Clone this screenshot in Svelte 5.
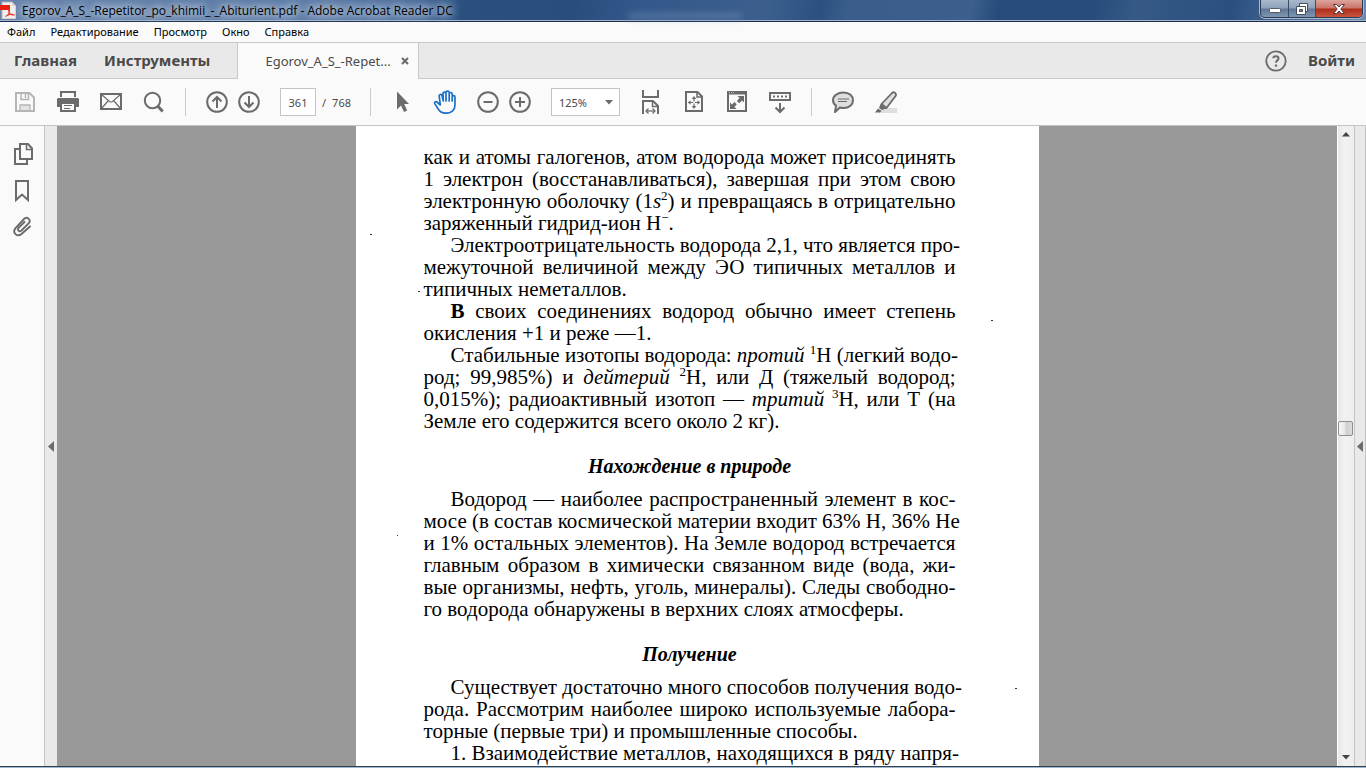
<script>
  const menu = ['Файл', 'Редактирование', 'Просмотр', 'Окно', 'Справка'];
  let pageNumber = $state('361');
  let zoomLevel = $state('125%');
  const scrollShare = 47;

  // Each line keeps the breaks of the printed page; `end` closes a paragraph, `indent` opens one.
  const sections = [
    {
      lines: [
        { t: 'как и атомы галогенов, атом водорода может присоединять' },
        { t: '1 электрон (восстанавливаться), завершая при этом свою' },
        { t: 'электронную оболочку (1<i>s</i><sup>2</sup>) и превращаясь в отрицательно' },
        { t: 'заряженный гидрид-ион Н<sup>−</sup>.', end: true },
        { t: 'Электроотрицательность водорода 2,1, что является про-', indent: true },
        { t: 'межуточной величиной между ЭО типичных металлов и' },
        { t: 'типичных неметаллов.', end: true },
        { t: '<b>В</b> своих соединениях водород обычно имеет степень', indent: true },
        { t: 'окисления +1 и реже —1.', end: true },
        { t: 'Стабильные изотопы водорода: <i>протий</i> <sup>1</sup>Н (легкий водо-', indent: true },
        { t: 'род; 99,985%) и <i>дейтерий</i> <sup>2</sup>Н, или Д (тяжелый водород;' },
        { t: '0,015%); радиоактивный изотоп — <i>тритий</i> <sup>3</sup>Н, или Т (на' },
        { t: 'Земле его содержится всего около 2 кг).', end: true }
      ]
    },
    {
      title: 'Нахождение в природе',
      lines: [
        { t: 'Водород — наиболее распространенный элемент в кос-', indent: true },
        { t: 'мосе (в состав космической материи входит 63% Н, 36% Не' },
        { t: 'и 1% остальных элементов). На Земле водород встречается' },
        { t: 'главным образом в химически связанном виде (вода, жи-' },
        { t: 'вые организмы, нефть, уголь, минералы). Следы свободно-' },
        { t: 'го водорода обнаружены в верхних слоях атмосферы.', end: true }
      ]
    },
    {
      title: 'Получение',
      lines: [
        { t: 'Существует достаточно много способов получения водо-', indent: true },
        { t: 'рода. Рассмотрим наиболее широко используемые лабора-' },
        { t: 'торные (первые три) и промышленные способы.', end: true },
        { t: '1. Взаимодействие металлов, находящихся в ряду напря-', indent: true }
      ]
    }
  ];
</script>

<div class="window">
  <header class="titlebar">
    <svg class="appicon" width="16" height="18" viewBox="0 0 16 18" aria-hidden="true">
      <path d="M2 1h10l4 4v13H2z" fill="#f1efee" stroke="#b9b4b2" stroke-width="1" />
      <path d="M12 1v4h4" fill="#d8d4d2" />
      <path d="M0 4h10v5H0z" fill="#e8200f" />
      <path d="M5.500 15.500c3-1.500 4.500-4.500 4-6.500-.6-1.200-1.400.4-.4 2.500 1 1.800 3.400 3 5 2.400-2-1.400-6-.4-8.600 1.600z" fill="none" stroke="#e23a2c" stroke-width="1.100" />
    </svg>
    <h1>Egorov_A_S_-Repetitor_po_khimii_-_Abiturient.pdf - Adobe Acrobat Reader DC</h1>
    <div class="ghost" aria-hidden="true"></div>
    <div class="winbuttons">
      <button class="min" aria-label="Свернуть">
        <svg width="12" height="6" viewBox="0 0 12 6"><rect x=".5" y=".5" width="11" height="4" rx="1" fill="#fff" stroke="#555b66" /></svg>
      </button>
      <button class="max" aria-label="Восстановить">
        <svg width="14" height="14" viewBox="0 0 14 14">
          <path d="M4.500 1.500h8v8h-8z" fill="#fff" stroke="#474e5b" />
          <path d="M1.500 4.500h9v8h-9z" fill="#fff" stroke="#474e5b" />
          <path d="M4.500 7.500h3v2h-3z" fill="#6f87a6" stroke="#474e5b" />
        </svg>
      </button>
      <button class="close" aria-label="Закрыть">
        <svg width="14" height="12" viewBox="0 0 14 12"><path d="M1.500 1.500h3.200L7 4l2.300-2.500h3.200L8.800 6l3.700 4.500H9.300L7 8l-2.300 2.500H1.500L5.200 6z" fill="#fff" stroke="#54343a" /></svg>
      </button>
    </div>
  </header>

  <nav class="menubar">
    {#each menu as item}<button>{item}</button>{/each}
  </nav>

  <div class="tabs">
    <button class="tab home">Главная</button>
    <button class="tab tools">Инструменты</button>
    <div class="doc-tab">
      <button class="doc-name">Egorov_A_S_-Repet...</button>
      <button class="doc-close" aria-label="Закрыть вкладку">
        <svg width="8" height="8" viewBox="0 0 8 8"><path d="M1 1l6 6M7 1L1 7" stroke="#6a6a6a" stroke-width="2" /></svg>
      </button>
    </div>
    <div class="account">
      <button class="help" aria-label="Помощь">
        <svg width="22" height="22" viewBox="0 0 22 22" fill="none" stroke="#6b6b6b">
          <circle cx="11" cy="11" r="9.700" stroke-width="1.800" />
          <path d="M8.300 8.200C8.300 5.500 13.500 5.500 13.500 8.400c0 2-2.500 2-2.500 4.400" stroke-width="2" />
          <path d="M11 14.500v2.200" stroke-width="2.200" />
        </svg>
      </button>
      <button class="tab signin">Войти</button>
    </div>
  </div>

  <div class="toolbar">
    <button aria-label="Сохранить">
      <svg viewBox="0 0 24 24" fill="none" stroke="#b5b5b5" stroke-width="2">
        <path d="M7 15h10v6H7z" fill="#e4e4e4" stroke-width="1.300" />
        <path d="M3 3h13.500L21 7.500V21H3z" />
        <path d="M8 3v6.500h7.500V3" stroke-width="1.500" /><path d="M12.500 4v4" stroke-width="1.500" />
      </svg>
    </button>
    <button aria-label="Печать">
      <svg viewBox="0 0 24 24">
        <path d="M4 1h16v6H4z" fill="#6b6b6b" /><path d="M6 3h12v4H6z" fill="#fafafa" />
        <path d="M2 8h20l1 1v8h-4v-4H5v4H1V9z" fill="#6b6b6b" />
        <path d="M5 13h14v8H5z" fill="#fafafa" stroke="#6b6b6b" stroke-width="2" />
        <path d="M8 15.500h8M8 18.500h6" stroke="#6b6b6b" />
      </svg>
    </button>
    <button aria-label="Отправить по почте">
      <svg viewBox="0 0 24 24" fill="none" stroke="#6b6b6b">
        <path d="M2 4h20v15H2z" stroke-width="2" />
        <path d="M2.500 4.500L11 12h2l8.500-7.500M2.500 18.500L9 11M21.500 18.500L15 11" stroke-width="1.200" />
      </svg>
    </button>
    <button aria-label="Поиск">
      <svg viewBox="0 0 24 24" fill="none" stroke="#6b6b6b">
        <circle cx="10.500" cy="10.500" r="7.700" stroke-width="2" /><path d="M15.500 15.800l5.200 5.600" stroke-width="3" />
      </svg>
    </button>
    <span class="sep"></span>
    <div class="pair">
      <button aria-label="Предыдущая страница">
        <svg viewBox="0 0 24 24" fill="none" stroke="#6b6b6b" stroke-width="2">
          <circle cx="12" cy="12" r="9.800" /><path d="M12 18V7M7.500 11.500L12 7l4.500 4.500" />
        </svg>
      </button>
      <button aria-label="Следующая страница">
        <svg viewBox="0 0 24 24" fill="none" stroke="#6b6b6b" stroke-width="2">
          <circle cx="12" cy="12" r="9.800" /><path d="M12 6v11M7.500 12.500L12 17l4.500-4.500" />
        </svg>
      </button>
    </div>
    <div class="pages">
      <input aria-label="Номер страницы" bind:value={pageNumber} />
      <span>/</span><span>768</span>
    </div>
    <span class="sep"></span>
    <button aria-label="Выделение">
      <svg viewBox="0 0 24 24"><path d="M7 1.500v18l4-4 3 6.500 3.200-1.400-3-6.500H19z" fill="#6b6b6b" /></svg>
    </button>
    <button aria-label="Рука">
      <svg viewBox="0 0 24 24" fill="none" stroke="#1a72c7" stroke-width="1.700" stroke-linejoin="round" stroke-linecap="round">
        <path d="M7.300 15L4 12c-1.400-1-3 .2-2.200 1.600L5 18.700C6.600 22 9 23.200 12.800 23.200c5.400 0 9.200-3 9.200-8.200V7.200c0-2-2.800-2-2.800 0V11V4c0-2-3-2-3 0v7V2.600c0-2-3.200-2-3.200 0V11V3.500c-.1-2-3.200-1.800-3 .2l.3 7.300L9 5.600c-.6-1.800-3.100-1.300-2.800.6z" />
      </svg>
    </button>
    <div class="pair">
      <button aria-label="Уменьшить">
        <svg viewBox="0 0 24 24" fill="none" stroke="#6b6b6b" stroke-width="2"><circle cx="12" cy="12" r="9.800" /><path d="M7.500 12h9" /></svg>
      </button>
      <button aria-label="Увеличить">
        <svg viewBox="0 0 24 24" fill="none" stroke="#6b6b6b" stroke-width="2"><circle cx="12" cy="12" r="9.800" /><path d="M7 12h10M12 7v10" /></svg>
      </button>
    </div>
    <div class="zoom">
      <select aria-label="Масштаб" bind:value={zoomLevel}>
        <option>100%</option><option>125%</option><option>150%</option>
      </select>
      <svg width="8" height="5" viewBox="0 0 8 5" aria-hidden="true"><path d="M0 0h8L4 4.500z" fill="#6b6b6b" /></svg>
    </div>
    <button aria-label="По ширине">
      <svg viewBox="0 0 24 24" fill="none" stroke="#6b6b6b" stroke-width="2">
        <path d="M4 0v7h15V0" /><path d="M4 24V11h10l5 5v8" /><path d="M13.500 11v5.500H19" stroke-width="1.500" />
        <path d="M7 21h9" stroke-width="1.300" /><path d="M9.500 18.500L7 21l2.500 2.500M13.500 18.500L16 21l-2.500 2.500" stroke-width="1.300" />
      </svg>
    </button>
    <button aria-label="Страница целиком">
      <svg viewBox="0 0 24 24" fill="none" stroke="#6b6b6b">
        <path d="M4 2h11.500L20 6.500V21H4z" stroke-width="2" /><path d="M15 2v5h5" stroke-width="1.500" />
        <path d="M8 12.500h3M13 12.500h3M12 8.500v3M12 13.500v3" stroke-width="1.200" />
        <path d="M12 6l2.300 3H9.700zM12 19l2.300-3H9.700zM5.800 12.500l2.700-2.200v4.400zM18.200 12.500l-2.700-2.200v4.400z" fill="#6b6b6b" stroke="none" />
      </svg>
    </button>
    <button aria-label="Во весь экран">
      <svg viewBox="0 0 24 24" fill="none" stroke="#6b6b6b">
        <path d="M3 2h18v19H3z" stroke-width="2" /><path d="M3 3h18" stroke-width="3" /><path d="M4 2.500h6" stroke="#bdbdbd" stroke-dasharray="1 1" />
        <path d="M12.500 6H19v6.500l-2-2-2.800 2.800-2.300-2.300L14.500 8zM11.500 19H5v-6.500l2 2 2.500-2.500 2.300 2.300L9.500 17z" fill="#6b6b6b" stroke="none" />
      </svg>
    </button>
    <button aria-label="Панель инструментов">
      <svg viewBox="0 0 24 24" fill="none" stroke="#6b6b6b" stroke-width="2">
        <path d="M2 3h20v7H2z" /><path d="M5 6.500h14" stroke-dasharray="2 2" /><path d="M12 13v9M7.500 17.500L12 22l4.500-4.500" />
      </svg>
    </button>
    <span class="sep"></span>
    <button aria-label="Комментарий">
      <svg viewBox="0 0 24 24" stroke="#6b6b6b">
        <path d="M12.500 2.500C18.500 2.500 22 6 22 10.200S18.500 18 12.500 18c-1.300 0-2.500-.1-3.600-.5L4 22l1-6.400C3 14.200 2 12.400 2 10.200 2 6 6.500 2.500 12.500 2.500z" fill="#dedede" stroke-width="2" stroke-linejoin="round" />
        <path d="M7 9h11M7 11.500h9" stroke-width="1.200" />
      </svg>
    </button>
    <button aria-label="Выделить текст">
      <svg viewBox="0 0 24 24">
        <path d="M7 18h16v5H5z" fill="#dedede" />
        <path d="M7.500 14L18 3c2-1.800 5 .6 3.600 3L12.500 18z" fill="#dedede" stroke="#6b6b6b" stroke-width="1.800" stroke-linejoin="round" />
        <path d="M6.500 14l6 4.500-4.500 1.500-3-2zM4 18.500L7.500 21 6 22.500H1z" fill="#6b6b6b" />
      </svg>
    </button>
  </div>

  <div class="workspace">
    <aside class="rail">
      <button aria-label="Миниатюры страниц">
        <svg viewBox="0 0 24 24" fill="none" stroke="#6b6b6b" stroke-width="2">
          <path d="M7 7H3v15h12v-4" /><path d="M8 2h8L20 6.500V17H8z" /><path d="M14.500 2v5.500H20" stroke-width="1.500" />
        </svg>
      </button>
      <button aria-label="Закладки">
        <svg viewBox="0 0 24 24" fill="none" stroke="#6b6b6b" stroke-width="2"><path d="M4 3h12v19l-6-5.500L4 22z" /></svg>
      </button>
      <button aria-label="Вложения">
        <svg viewBox="0 0 24 24" fill="none" stroke="#6b6b6b" stroke-width="1.900" stroke-linecap="round">
          <path d="M18 12.500L9.500 20C5 23.500 0 18.800 3.500 14.200L12 5c3-3 7.500.6 4.800 4.200L9.500 16.500c-2.400 2-4.600-.6-2.700-2.800L12.500 8" />
        </svg>
      </button>
    </aside>
    <button class="collapse left" aria-label="Свернуть левую панель"><svg width="6" height="11" viewBox="0 0 6 11"><path d="M6 0v11L0 5.500z" fill="#6b6b6b" /></svg></button>

    <main class="canvas">
      <article class="page">
        {#each sections as section}
          {#if section.title}<h2>{section.title}</h2>{/if}
          {#each section.lines as line}
            <div class="line" class:end={line.end} class:indent={line.indent}>{@html line.t}</div>
          {/each}
        {/each}
        <svg class="specks" viewBox="0 0 683 640" width="683" height="640" aria-hidden="true">
          <path d="M14 108h2v1h-2zM62 165h2v1h-2zM635 194h2v1h-2zM41 409h1v1h-1zM659 562h2v1h-2z" fill="#333" />
        </svg>
      </article>
    </main>

    <div class="scrollbar">
      <button aria-label="Прокрутить вверх"><svg width="8" height="5" viewBox="0 0 8 5"><path d="M4 0l4 4.500H0z" fill="#444" /></svg></button>
      <div class="track">
        <span style="flex-grow: {scrollShare}"></span>
        <span class="thumb"></span>
        <span style="flex-grow: {100 - scrollShare}"></span>
      </div>
      <button aria-label="Прокрутить вниз"><svg width="8" height="5" viewBox="0 0 8 5"><path d="M4 4.500L8 0H0z" fill="#444" /></svg></button>
    </div>
    <button class="collapse right" aria-label="Показать правую панель"><svg width="6" height="11" viewBox="0 0 6 11"><path d="M6 0v11L0 5.500z" fill="#6b6b6b" /></svg></button>
  </div>
  <div class="frame"></div>
</div>

<style>
  :global(body) { margin: 0; overflow: hidden; }
  .window {
    display: flex;
    flex-direction: column;
    height: 100vh;
    background: #fafafa;
    color: #000;
    font-family: "Noto Sans", "Open Sans", sans-serif;
    font-size: 11px;
  }
  button {
    display: flex;
    align-items: center;
    justify-content: center;
    flex: none;
    margin: 0;
    padding: 0;
    border: 0;
    background: none;
    color: inherit;
    font: inherit;
    white-space: nowrap;
  }
  svg { display: block; flex: none; }

  .titlebar {
    position: relative;
    display: flex;
    flex: none;
    box-sizing: border-box;
    height: 22px;
    border-bottom: 1px solid #1d2d4a;
    box-shadow: inset 0 -1px #9fb3cf;
    background: linear-gradient(100deg, #6783ab 0, #5b79a5 24%, #4d6d9c 30%, #2b5080 34%, #294e7e 42%, #34588a 47%, #3c5f8e 56%, #2c5181 60%, #3a5d8b 62%, #3c5f8d 71%, #274c7b 73%, #284d7c 80%, #365985 83%, #2b5080 90%, #6b87ad 100%);
  }
  .appicon { margin: 1px 6px 0 0; }
  h1 {
    margin: 0 auto 0 0;
    font-family: "Open Sans", "Noto Sans", sans-serif;
    font-size: 12px;
    font-weight: 400;
    line-height: 22px;
    white-space: nowrap;
    text-shadow: 0 0 8px #c9d6e6, 0 0 8px #c9d6e6, 0 0 10px #c9d6e6;
  }
  .ghost {
    position: absolute;
    left: 46%;
    bottom: 2px;
    width: 114px;
    height: 6px;
    background: #6f8db6;
    opacity: 0.5;
    filter: blur(3px);
  }
  .winbuttons {
    display: flex;
    height: 17px;
    margin-right: 3px;
    border: 1px solid #2d3c55;
    border-top: 0;
    border-radius: 0 0 5px 5px;
    box-shadow: 0 0 0 1px #a8b9cf;
    overflow: hidden;
  }
  .winbuttons button { background: linear-gradient(#a9b8cc 0, #8ea1ba 48%, #5f7796 52%, #7d96b4 100%); }
  .min { width: 28px; border-right: 1px solid #3c4c66; }
  .min svg { margin-top: 4px; }
  .max { width: 27px; border-right: 1px solid #3c4c66; }
  .winbuttons .close { width: 46px; background: linear-gradient(#dba59d 0, #cb7468 48%, #ad2d1a 52%, #c9553f 100%); }

  .menubar {
    display: flex;
    flex: none;
    gap: 15px;
    height: 18px;
    padding: 0 0 2px 7px;
    border-bottom: 1px solid #c9c9c9;
  }
  .tabs {
    display: flex;
    flex: none;
    height: 36px;
    background: #e9e9e9;
    color: #4a4a4a;
    box-shadow: inset 0 -1px #c9c9c9;
  }
  .tab { padding-bottom: 2px; font-size: 15px; font-weight: 700; }
  .home { margin-left: 14px; }
  .tools { margin: 0 27px; }
  .doc-tab {
    display: flex;
    align-items: center;
    gap: 10px;
    padding: 0 9px 0 27px;
    border: solid #c9c9c9;
    border-width: 0 1px;
    background: #fafafa;
  }
  .doc-name { font-size: 13px; }
  .account { display: flex; gap: 21px; margin-left: auto; padding-right: 11px; }

  .toolbar {
    display: flex;
    flex: none;
    align-items: center;
    gap: 19px;
    height: 47px;
    box-sizing: border-box;
    padding: 0 13px;
    border-bottom: 1px solid #c4c4c4;
    color: #4a4a4a;
  }
  .toolbar svg { width: 24px; height: 24px; }
  .sep { width: 1px; height: 28px; background: #cacaca; }
  .pair { display: flex; gap: 8px; }
  .pages { display: flex; align-items: center; gap: 6px; }
  input, select {
    box-sizing: border-box;
    height: 28px;
    margin: 0;
    border: 1px solid #c4c4c4;
    border-radius: 0;
    background: #fff;
    color: #4a4a4a;
    font: inherit;
  }
  input { width: 36px; padding: 0; text-align: center; }
  .zoom { position: relative; }
  select { display: block; width: 69px; padding: 0 7px; appearance: none; }
  .toolbar .zoom svg { position: absolute; right: 7px; top: 12px; width: 8px; height: 5px; }

  .workspace { display: flex; flex: 1; min-height: 0; }
  .rail {
    display: flex;
    flex: none;
    flex-direction: column;
    align-items: flex-start;
    gap: 12px;
    width: 44px;
    box-sizing: border-box;
    padding: 16px 0 0 12px;
  }
  .rail svg { width: 24px; height: 24px; }
  .collapse { box-sizing: border-box; width: 13px; background: #e9e9e9; border-left: 1px solid #c4c4c4; }
  .right { width: 12px; border-right: 1px solid #c4c4c4; }
  .canvas { flex: 1; min-width: 0; overflow: hidden; background: #999; }
  .page {
    position: relative;
    box-sizing: border-box;
    width: 683px;
    min-height: 100%;
    margin: 0 auto;
    padding: 20px 83px 0 68px;
    background: #fff;
    font-family: "Liberation Serif", serif;
    font-size: 21px;
    line-height: 22px;
  }
  .line { text-align: justify; text-align-last: justify; white-space: nowrap; }
  .end { text-align-last: left; }
  .indent { padding-left: 27px; }
  .line :global(sup) { font-size: 13px; line-height: 0; }
  h2 {
    margin: 23px 0 11px;
    font-size: 20px;
    font-style: italic;
    line-height: 22px;
    text-align: center;
  }
  .specks { position: absolute; left: 0; top: 0; }

  .scrollbar {
    display: flex;
    flex: none;
    flex-direction: column;
    box-sizing: border-box;
    width: 17px;
    border-left: 1px solid #fff;
    background: linear-gradient(90deg, #e6e6e6, #f2f2f2 40%, #eee);
  }
  .scrollbar button { height: 17px; }
  .track { display: flex; flex: 1; flex-direction: column; }
  .thumb {
    flex: none;
    box-sizing: border-box;
    width: 15px;
    height: 15px;
    border: 1px solid #8f8f8f;
    border-radius: 2px;
    background: linear-gradient(90deg, #f7f7f7 0, #e6e6e6 45%, #cfcfd2 55%, #dcdcdc 100%);
  }
  .frame { flex: none; height: 1px; border-top: 1px solid #344050; background: #9fb6cf; }
</style>
